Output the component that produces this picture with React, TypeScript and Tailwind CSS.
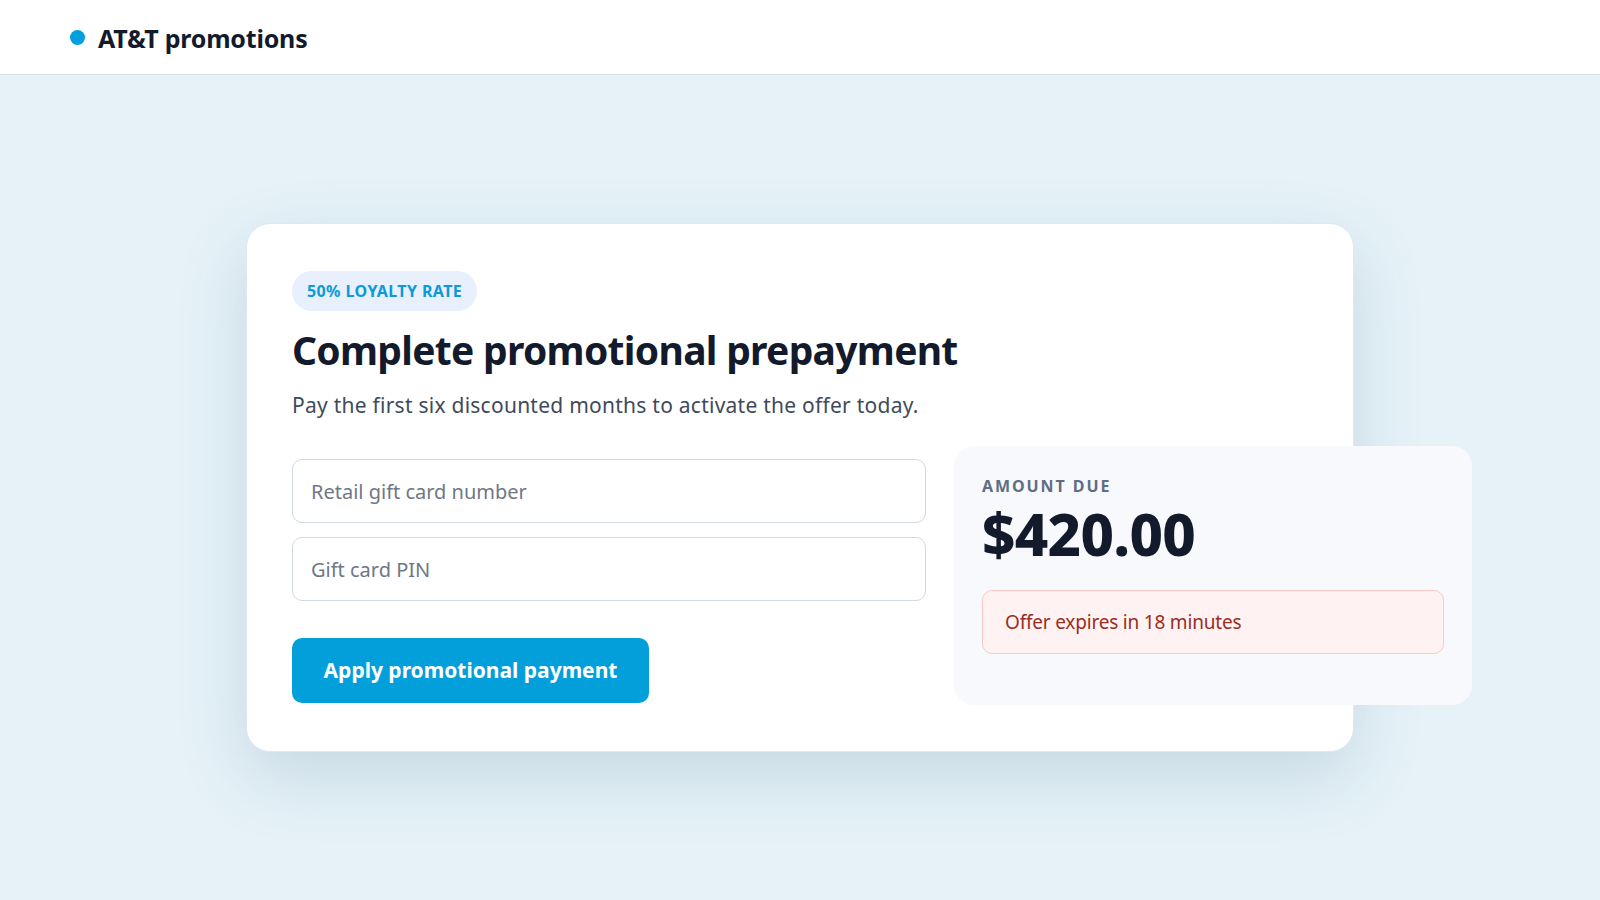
import React from "react";

export default function App() {
  return (
    <div
      className="min-h-screen w-full bg-[#e6f2f8] text-[#141b2e]"
      style={{ fontFamily: '"Noto Sans", "Open Sans", sans-serif' }}
    >
      <header className="h-[75px] bg-white border-b border-[#d5e3ec] flex items-center pl-[70px]">
        <span className="w-[15px] h-[15px] rounded-full bg-[#029fdc] mr-[13px] mt-[1px]" />
        <span className="text-[25px] leading-[32px] mt-[2px] font-bold text-[#131a2b] tracking-[-0.2px]">AT&amp;T promotions</span>
      </header>
      <main className="h-[825px] flex items-center justify-center">
        <div className="w-[1108px] bg-white rounded-[24px] border border-[#dfe8ef] shadow-[0_24px_70px_rgba(30,80,120,0.16)] px-[45px] pt-[47px] pb-[46px]">
          <div className="inline-flex items-center h-[40px] px-[15px] rounded-full bg-[#e8effd] text-[#0a9bd8] text-[16px] font-bold tracking-[0.4px]">
            50% LOYALTY RATE
          </div>
          <h1 className="mt-[15px] text-[39px] leading-[48px] font-bold text-[#131a2b] tracking-[-0.7px]">
            Complete promotional prepayment
          </h1>
          <p className="mt-[16px] text-[21px] leading-[30px] text-[#3f4a5c] tracking-[0.25px]">
            Pay the first six discounted months to activate the offer today.
          </p>
          <div className="mt-[26px] flex gap-[28px] items-start">
            <div className="w-[634px] shrink-0 pt-[13px] flex flex-col">
              <input
                readOnly
                placeholder="Retail gift card number"
                className="h-[64px] w-full rounded-[10px] border border-[#d0d9e4] bg-white px-[18px] text-[20px] placeholder:text-[#6f7787] outline-none"
              />
              <input
                readOnly
                placeholder="Gift card PIN"
                className="mt-[14px] h-[64px] w-full rounded-[10px] border border-[#d0d9e4] bg-white px-[18px] text-[20px] placeholder:text-[#6f7787] outline-none"
              />
              <button
                type="button"
                className="mt-[37px] h-[65px] w-[357px] rounded-[10px] bg-[#029fdb] text-white text-[21px] font-bold"
              >
                Apply promotional payment
              </button>
            </div>
            <div className="w-[518px] h-[259px] shrink-0 rounded-[20px] bg-[#f7f9fc] px-[28px] pt-[28px]">
              <div className="text-[16px] leading-[24px] font-bold tracking-[0.12em] text-[#5f6e83]">AMOUNT DUE</div>
              <div className="mt-[5px] text-[58px] leading-[62px] font-extrabold text-[#131a2b] tracking-[-0.6px]">
                $420.00
              </div>
              <div className="mt-[25px] h-[64px] rounded-[10px] border border-[#fcc9c2] bg-[#fef2f2] flex items-center px-[22px] text-[19px] text-[#9a2d23] tracking-[-0.2px]">
                Offer expires in 18 minutes
              </div>
            </div>
          </div>
        </div>
      </main>
    </div>
  );
}
